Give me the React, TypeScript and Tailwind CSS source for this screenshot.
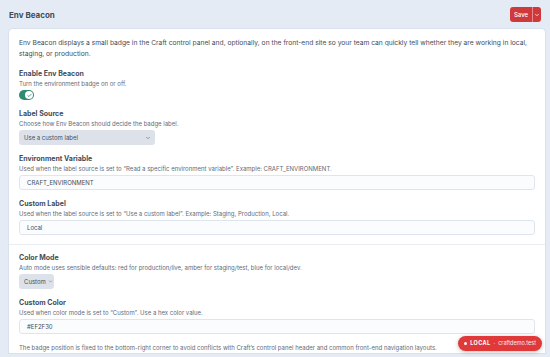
import { ChevronDown, Check } from "lucide-react";

const Field = ({
  label,
  hint,
  children,
}: {
  label: string;
  hint: string;
  children: React.ReactNode;
}) => (
  <div className="flex flex-col">
    <div className="text-[7px] leading-[11px] font-bold text-[#3f4d5a]">{label}</div>
    <div className="text-[6px] leading-[10px] text-[#5f6b78]">{hint}</div>
    <div className="mt-[1px]">{children}</div>
  </div>
);

const TextInput = ({ value }: { value: string }) => (
  <div className="h-[15px] w-full rounded-[3px] border border-[#dfe5ec] bg-[#fbfcfe] px-[7px] text-[6px] leading-[13px] text-[#3f4d5a]">
    {value}
  </div>
);

export default function App() {
  return (
    <div
      className="relative h-[357px] w-[550px] overflow-hidden bg-[#e4ebf5]"
      style={{ fontFamily: "Inter, 'Liberation Sans', sans-serif" }}
    >
      {/* header */}
      <div className="flex h-[29px] items-center justify-between pl-[9px] pr-[9px]">
        <h1 className="text-[8px] font-bold text-[#3f4d5a]">Env Beacon</h1>
        <div className="flex h-[15px] items-stretch overflow-hidden rounded-[3px] bg-[#d0393a] text-white">
          <span className="flex items-center px-[4px] text-[6px] font-medium">Save</span>
          <span className="w-px bg-[#e88a8a]" />
          <span className="flex items-center px-[1px]">
            <ChevronDown className="h-[6px] w-[6px]" strokeWidth={3} />
          </span>
        </div>
      </div>

      {/* card */}
      <div className="ml-[9px] mr-[5px] rounded-t-[4px] bg-white pt-[9px] shadow-[0_0_0_1px_rgba(205,216,228,0.5)]">
        <div className="px-[10px]">
          <p className="text-[6.7px] leading-[11px] text-[#3f4d5a]">
            Env Beacon displays a small badge in the Craft control panel and, optionally, on the front-end site so your team can quickly tell whether they are working in local, staging, or production.
          </p>

          <div className="mt-[8px] flex flex-col gap-[8px]">
            <Field label="Enable Env Beacon" hint="Turn the environment badge on or off.">
              <div className="flex h-[10px] w-[15px] items-center justify-end rounded-full bg-[#2f8a72] pr-[1px]">
                <div className="flex h-[8px] w-[8px] items-center justify-center rounded-full bg-white">
                  <Check className="h-[5px] w-[5px] text-[#2f8a72]" strokeWidth={4} />
                </div>
              </div>
            </Field>

            <Field label="Label Source" hint="Choose how Env Beacon should decide the badge label.">
              <div className="flex h-[15px] w-[136px] items-center justify-between rounded-[3px] bg-[#dde2ea] pl-[5px] pr-[4px] text-[6px] text-[#3f4d5a]">
                <span>Use a custom label</span>
                <ChevronDown className="h-[6px] w-[6px] text-[#606d7b]" strokeWidth={2.5} />
              </div>
            </Field>

            <Field
              label="Environment Variable"
              hint={'Used when the label source is set to “Read a specific environment variable”. Example: CRAFT_ENVIRONMENT.'}
            >
              <TextInput value="CRAFT_ENVIRONMENT" />
            </Field>

            <Field
              label="Custom Label"
              hint={'Used when the label source is set to “Use a custom label”. Example: Staging, Production, Local.'}
            >
              <TextInput value="Local" />
            </Field>
          </div>
        </div>

        <div className="mt-[9px] h-px bg-[#e8edf3]" />

        <div className="px-[10px] pt-[7px]">
          <div className="flex flex-col gap-[8px]">
            <Field
              label="Color Mode"
              hint="Auto mode uses sensible defaults: red for production/live, amber for staging/test, blue for local/dev."
            >
              <div className="flex h-[15px] w-[35px] items-center gap-[2px] rounded-[3px] bg-[#dde2ea] pl-[5px] text-[6px] text-[#3f4d5a]">
                <span>Custom</span>
                <ChevronDown className="h-[5px] w-[5px] text-[#606d7b]" strokeWidth={2.5} />
              </div>
            </Field>

            <Field label="Custom Color" hint={'Used when color mode is set to “Custom”. Use a hex color value.'}>
              <TextInput value="#EF2F30" />
            </Field>
          </div>

          <p className="mt-[9px] text-[6px] leading-[10px] text-[#5f6b78]">
            The badge position is fixed to the bottom-right corner to avoid conflicts with Craft’s control panel header and common front-end navigation layouts.
          </p>
        </div>
      </div>

      {/* env badge */}
      <div className="absolute bottom-[6px] right-[8px] flex h-[15px] items-center gap-[3px] rounded-full bg-[#e0393a] px-[6px] text-[5.5px] text-white shadow-[0_1px_4px_rgba(0,0,0,0.25)]">
        <span className="h-[3px] w-[3px] rounded-full bg-white" />
        <span className="font-bold tracking-[0.4px]">LOCAL</span>
        <span className="opacity-70">·</span>
        <span className="opacity-90">craftdemo.test</span>
      </div>
    </div>
  );
}
